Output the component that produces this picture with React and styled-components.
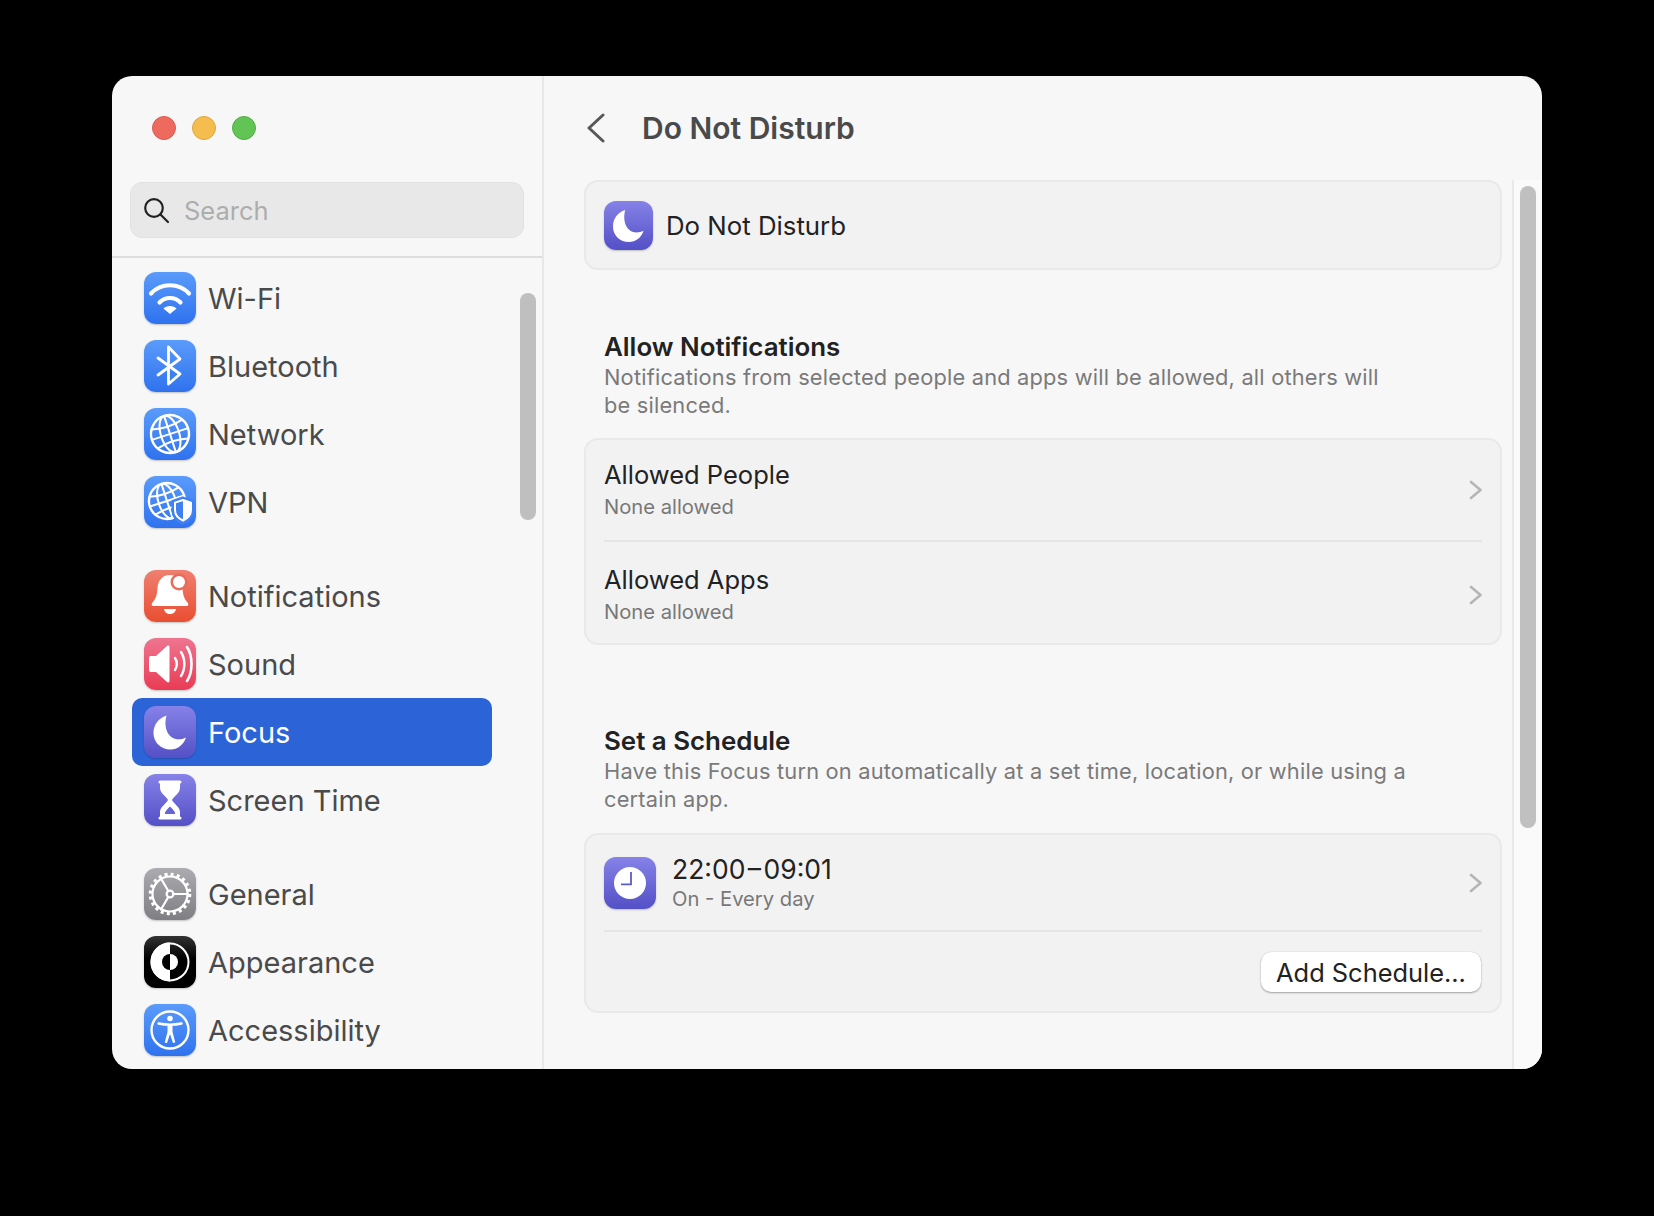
import React from 'react';
import styled, { createGlobalStyle } from 'styled-components';

const Global = createGlobalStyle`
  html, body { margin: 0; padding: 0; background: #000; height: 100%; overflow: hidden; }
  body { font-family: Inter, "Liberation Sans", sans-serif; -webkit-font-smoothing: antialiased; }
`;

const gradients = {
  blue: 'linear-gradient(#5a9bfb, #3072ee)',
  red: 'linear-gradient(#ef8070, #e94e32)',
  pink: 'linear-gradient(#ee7590, #ea3b55)',
  purple: 'linear-gradient(#8682e8, #5450c6)',
  gray: 'linear-gradient(#acacb0, #7f7f83)',
  black: 'linear-gradient(#333, #000 45%)',
};

const Window = styled.div`
  width: 1430px;
  height: 993px;
  margin: 76px 0 0 112px;
  background: #f7f7f7;
  border-radius: 20px;
  overflow: hidden;
  display: flex;
`;

const Sidebar = styled.aside`
  position: relative;
  width: 432px;
  flex: none;
  box-sizing: border-box;
  border-right: 2px solid #e8e8e8;
  overflow: hidden;
`;

const Lights = styled.div`
  display: flex;
  gap: 16px;
  padding: 40px 0 0 40px;
`;

const Light = styled.span`
  width: 24px;
  height: 24px;
  border-radius: 50%;
  box-sizing: border-box;
  background: ${(p) => p.$color};
  border: 1px solid ${(p) => p.$edge};
`;

const Search = styled.div`
  box-sizing: border-box;
  margin: 42px 18px 0;
  height: 56px;
  display: flex;
  align-items: center;
  gap: 14px;
  padding-left: 12px;
  background: #e8e8e8;
  border: 1px solid #e1e1e1;
  border-radius: 12px;
  color: #adadad;
  font-size: 25.5px;
`;

const SideRule = styled.div`
  height: 2px;
  margin-top: 18px;
  background: #dedede;
`;

const Nav = styled.nav`
  padding: 6px 0 0 20px;
  display: flex;
  flex-direction: column;
`;

const NavGroup = styled.div`
  display: flex;
  flex-direction: column;
  margin-bottom: 26px;
`;

const NavRow = styled.div`
  box-sizing: border-box;
  width: 360px;
  height: 68px;
  padding-left: 12px;
  display: flex;
  align-items: center;
  gap: 12px;
  border-radius: 10px;
  font-size: 29px;
  color: ${(p) => (p.$active ? '#fff' : '#4a4a4a')};
  background: ${(p) => (p.$active ? '#2c64d8' : 'transparent')};
`;

const AppIcon = styled.span`
  width: ${(p) => p.$size || 52}px;
  height: ${(p) => p.$size || 52}px;
  flex: none;
  display: block;
  border-radius: ${(p) => (p.$size ? Math.round(p.$size * 0.24) : 12)}px;
  background: ${(p) => gradients[p.$tone]};
  box-shadow: 0 1px 2px rgba(0, 0, 0, 0.22);
  svg { display: block; width: 100%; height: 100%; }
`;

const SideThumb = styled.div`
  position: absolute;
  left: 408px;
  top: 217px;
  width: 16px;
  height: 227px;
  border-radius: 8px;
  background: #bfbfbf;
`;

const Main = styled.main`
  flex: 1;
  min-width: 0;
  display: flex;
  flex-direction: column;
`;

const Header = styled.header`
  height: 104px;
  flex: none;
  display: flex;
  align-items: center;
  padding: 0 0 0 43px;
  gap: 37px;
  box-sizing: border-box;
  color: #4a4a4a;
`;

const PageTitle = styled.h1`
  margin: -1px 0 0;
  font-size: 30px;
  font-weight: 600;
  color: #4a4a4a;
`;

const Body = styled.div`
  flex: 1;
  display: flex;
  min-height: 0;
`;

const Content = styled.div`
  flex: 1;
  padding: 0 10px 0 40px;
  min-width: 0;
`;

const Track = styled.div`
  width: 22px;
  flex: none;
  background: #fafafa;
  border-left: 2px solid #e9e9e9;
  padding: 6px 0 0 6px;
`;

const TrackThumb = styled.div`
  width: 16px;
  height: 642px;
  border-radius: 8px;
  background: #c0c0c0;
`;

const Card = styled.section`
  box-sizing: border-box;
  background: #f2f2f2;
  border: 2px solid #e9e9e9;
  border-radius: 14px;
  padding: 0 18px;
`;

const TopRow = styled.div`
  height: 86px;
  display: flex;
  align-items: center;
  gap: 13px;
  font-size: 25.8px;
  color: #222;
`;

const SectionHead = styled.div`
  padding: 0 20px;
  margin-top: ${(p) => p.$top}px;
  margin-bottom: ${(p) => p.$gap}px;
`;

const SectionTitle = styled.h2`
  margin: 0;
  font-size: 25.9px;
  line-height: 32px;
  font-weight: 600;
  color: #222;
`;

const SectionText = styled.p`
  margin: 0;
  font-size: 21.8px;
  line-height: 28px;
  color: #7a7a7a;
  letter-spacing: 0.2px;
  white-space: nowrap;
`;

const ListRow = styled.div`
  height: ${(p) => p.$h}px;
  display: flex;
  align-items: center;
  gap: 16px;
  box-sizing: border-box;
  padding-top: ${(p) => p.$top || 0}px;
  border-bottom: ${(p) => (p.$rule ? '2px solid #e5e5e5' : 'none')};
`;

const RowText = styled.div`
  flex: 1;
  display: flex;
  flex-direction: column;
`;

const RowTitle = styled.div`
  font-size: 25.5px;
  line-height: 34px;
  color: #222;
`;

const TimeTitle = styled(RowTitle)`
  font-size: 26.5px;
  line-height: 31px;
`;

const RowSub = styled.div`
  font-size: 20.2px;
  line-height: 30px;
  color: #787878;
`;

const TimeSub = styled(RowSub)`
  line-height: 27px;
`;

const ButtonRow = styled.div`
  display: flex;
  justify-content: flex-end;
  padding: 20px 1px 0 0;
  height: 79px;
  box-sizing: border-box;
`;

const PushButton = styled.button`
  width: 220px;
  height: 40px;
  padding: 0;
  border: none;
  border-radius: 10px;
  background: #fff;
  box-shadow: 0 1px 2px rgba(0, 0, 0, 0.32), 0 0 1px rgba(0, 0, 0, 0.2);
  font-family: inherit;
  font-size: 25.4px;
  color: #222;
`;

const Line = (p) => <path fill="none" stroke="#fff" strokeLinecap="round" strokeLinejoin="round" {...p} />;

const Moon = () => (
  <svg viewBox="0 0 52 52"><path fill="#fff" d="M22.500 9.500C14.500 12 9.500 19 9.500 27c0 9.500 7.500 16.500 17 16.500 7 0 13-4.500 15.500-12-2.500 1.300-5 1.800-7.500 1.800C25 33.300 19 23 22.500 9.500z" /></svg>
);

const GlobeLines = ({ r = 19, cx = 26, cy = 26 }) => (
  <g transform={`rotate(-18 ${cx} ${cy})`}>
    <circle cx={cx} cy={cy} r={r} fill="none" stroke="#fff" strokeWidth="2.4" />
    <ellipse cx={cx} cy={cy} rx={r * 0.48} ry={r} fill="none" stroke="#fff" strokeWidth="2" />
    <Line strokeWidth="2" d={`M${cx} ${cy - r}V${cy + r}`} />
    <Line strokeWidth="2" d={`M${cx - r} ${cy}H${cx + r}`} />
    <Line strokeWidth="2" d={`M${cx - r * 0.82} ${cy - r * 0.52}Q${cx} ${cy - r * 0.3} ${cx + r * 0.82} ${cy - r * 0.52}`} />
    <Line strokeWidth="2" d={`M${cx - r * 0.82} ${cy + r * 0.52}Q${cx} ${cy + r * 0.3} ${cx + r * 0.82} ${cy + r * 0.52}`} />
  </g>
);

const icons = {
  wifi: (
    <svg viewBox="0 0 52 52">
      <Line strokeWidth="4.200" d="M7 21.500C17 10.500 35 10.500 45 21.500" />
      <Line strokeWidth="4.200" d="M15.500 30.500C21 24.500 31 24.500 36.500 30.500" />
      <path fill="#fff" d="M26 34c2.600 0 5 1 6.600 2.400L26 42l-6.600-5.600C21 35 23.400 34 26 34z" />
    </svg>
  ),
  bluetooth: (
    <svg viewBox="0 0 52 52">
      <Line strokeWidth="2.800" d="M14 18L36 34 24.500 44V7L36 19 14 35" />
    </svg>
  ),
  network: <svg viewBox="0 0 52 52"><GlobeLines /></svg>,
  vpn: (
    <svg viewBox="0 0 52 52">
      <GlobeLines cx={23} cy={25} r={18} />
      <path fill="#3f80f2" stroke="#3f80f2" strokeWidth="5" d="M39 23l9 3v8c0 6-4 10-9 12-5-2-9-6-9-12v-8z" />
      <path fill="none" stroke="#fff" strokeWidth="2" strokeLinejoin="round" d="M39 24l8 2.600V34c0 5-3.500 8.500-8 10.500-4.500-2-8-5.500-8-10.500v-7.400z" />
      <path fill="#fff" d="M39 24l8 2.600V34c0 5-3.500 8.500-8 10.500z" />
    </svg>
  ),
  bell: (
    <svg viewBox="0 0 52 52">
      <path fill="#fff" d="M26 5c-8 0-12 6-12.500 13-.4 6-1 10-5 14.500-1.500 2-1 3.500 1 3.500h33c2 0 2.500-1.500 1-3.500-4-4.500-4.600-8.500-5-14.500C38 11 34 5 26 5z" />
      <path fill="#fff" d="M20 39h12c-.5 3-3 5-6 5s-5.500-2-6-5z" />
      <circle cx="35" cy="12" r="8.500" fill="#ec6b58" />
      <circle cx="35" cy="12" r="6" fill="#fff" />
    </svg>
  ),
  sound: (
    <svg viewBox="0 0 52 52">
      <path fill="#fff" d="M5 20c0-1.500 1-2 2-2h5l11-10c1.500-1 2.500-.5 2.500 1.500v33c0 2-1 2.500-2.500 1.500L12 34H7c-1 0-2-.5-2-2z" />
      <Line strokeWidth="2.400" d="M31 20c2.500 4 2.500 8 0 12" />
      <Line strokeWidth="2.400" d="M37 14c4.500 7 4.500 17 0 24" />
      <Line strokeWidth="2.600" d="M43 9c6 9 6 25 0 34" />
    </svg>
  ),
  moon: <Moon />,
  hourglass: (
    <svg viewBox="0 0 52 52">
      <Line strokeWidth="3" d="M16 8h20M16 44h20" />
      <path fill="#fff" d="M16 8h20v6c0 5-6 8-8 12 2 4 8 7 8 12v6H16v-6c0-5 6-8 8-12-2-4-8-7-8-12z" />
      <path fill="#6764d4" d="M21 38.500c1-2 3-4 5-6 2 2 4 4 5 6v1.500H21z" />
    </svg>
  ),
  gear: (
    <svg viewBox="0 0 52 52">
      <circle cx="26" cy="26" r="17.500" fill="none" stroke="#fff" strokeWidth="2.200" />
      <circle cx="26" cy="26" r="19.500" fill="none" stroke="#fff" strokeWidth="3.600" strokeDasharray="3 3.130" />
      <circle cx="26" cy="26" r="3.400" fill="none" stroke="#fff" strokeWidth="2.200" />
      <Line strokeWidth="2.200" d="M29.400 26H44M24.300 23L17 10.500M24.300 29L17 41.500" />
    </svg>
  ),
  appearance: (
    <svg viewBox="0 0 52 52">
      <circle cx="26" cy="26" r="18.500" fill="none" stroke="#fff" strokeWidth="2" />
      <path fill="#fff" d="M26 6.500a19.500 19.500 0 0 0 0 39z" />
      <path fill="#000" d="M26 18a8 8 0 0 0 0 16z" />
      <path fill="#fff" d="M26 18a8 8 0 0 1 0 16z" />
    </svg>
  ),
  accessibility: (
    <svg viewBox="0 0 52 52">
      <circle cx="26" cy="26" r="18.500" fill="none" stroke="#fff" strokeWidth="2.400" />
      <circle cx="26" cy="14.500" r="2.800" fill="#fff" />
      <Line strokeWidth="2.400" d="M14.500 19.500C22 21 30 21 37.500 19.500" />
      <path fill="#fff" d="M23.500 20.500h5V28l2.800 10.500-2.300.5L26 30l-3 9-2.300-.5L23.500 28z" />
    </svg>
  ),
  clock: (
    <svg viewBox="0 0 52 52">
      <circle cx="26" cy="26" r="16" fill="#fff" />
      <path fill="none" stroke="#5f5acb" strokeWidth="1.800" d="M27 15v12.300H17" />
    </svg>
  ),
};

const navGroups = [
  [
    { label: 'Wi-Fi', icon: 'wifi', tone: 'blue' },
    { label: 'Bluetooth', icon: 'bluetooth', tone: 'blue' },
    { label: 'Network', icon: 'network', tone: 'blue' },
    { label: 'VPN', icon: 'vpn', tone: 'blue' },
  ],
  [
    { label: 'Notifications', icon: 'bell', tone: 'red' },
    { label: 'Sound', icon: 'sound', tone: 'pink' },
    { label: 'Focus', icon: 'moon', tone: 'purple', active: true },
    { label: 'Screen Time', icon: 'hourglass', tone: 'purple' },
  ],
  [
    { label: 'General', icon: 'gear', tone: 'gray' },
    { label: 'Appearance', icon: 'appearance', tone: 'black' },
    { label: 'Accessibility', icon: 'accessibility', tone: 'blue' },
  ],
];

const SearchIcon = () => (
  <svg width="27" height="27" viewBox="0 0 27 27" fill="none" stroke="#222" strokeWidth="2.200" strokeLinecap="round">
    <circle cx="11" cy="11" r="8.800" />
    <path d="M17.500 17.500L25 25" />
  </svg>
);

const Back = () => (
  <svg width="18" height="30" viewBox="0 0 18 30" fill="none" stroke="#585858" strokeWidth="3" strokeLinecap="round" strokeLinejoin="round">
    <path d="M16 2L2 15l14 13" />
  </svg>
);

const Chevron = () => (
  <svg width="13" height="20" viewBox="0 0 13 20" fill="none" stroke="#b5b5b5" strokeWidth="2.600" strokeLinecap="round" strokeLinejoin="round">
    <path d="M2 2l9.500 8L2 18" />
  </svg>
);

export default function App() {
  return (
    <>
      <Global />
      <Window>
        <Sidebar>
          <Lights>
            <Light $color="#ee6a5f" $edge="#d95b50" />
            <Light $color="#f5bd4f" $edge="#dfa640" />
            <Light $color="#61c454" $edge="#52ae46" />
          </Lights>
          <Search>
            <SearchIcon />
            Search
          </Search>
          <SideRule />
          <Nav>
            {navGroups.map((group) => (
              <NavGroup key={group[0].label}>
                {group.map((item) => (
                  <NavRow key={item.label} $active={item.active}>
                    <AppIcon $tone={item.tone}>{icons[item.icon]}</AppIcon>
                    {item.label}
                  </NavRow>
                ))}
              </NavGroup>
            ))}
          </Nav>
          <SideThumb />
        </Sidebar>

        <Main>
          <Header>
            <Back />
            <PageTitle>Do Not Disturb</PageTitle>
          </Header>
          <Body>
            <Content>
              <Card>
                <TopRow>
                  <AppIcon $tone="purple" $size={49}><Moon /></AppIcon>
                  Do Not Disturb
                </TopRow>
              </Card>

              <SectionHead $top={61} $gap={19}>
                <SectionTitle>Allow Notifications</SectionTitle>
                <SectionText>Notifications from selected people and apps will be allowed, all others will<br />be silenced.</SectionText>
              </SectionHead>
              <Card>
                <ListRow $h={102} $rule>
                  <RowText>
                    <RowTitle>Allowed People</RowTitle>
                    <RowSub>None allowed</RowSub>
                  </RowText>
                  <Chevron />
                </ListRow>
                <ListRow $h={101} $top={5}>
                  <RowText>
                    <RowTitle>Allowed Apps</RowTitle>
                    <RowSub>None allowed</RowSub>
                  </RowText>
                  <Chevron />
                </ListRow>
              </Card>

              <SectionHead $top={80} $gap={20}>
                <SectionTitle>Set a Schedule</SectionTitle>
                <SectionText>Have this Focus turn on automatically at a set time, location, or while using a<br />certain app.</SectionText>
              </SectionHead>
              <Card>
                <ListRow $h={97} $rule>
                  <AppIcon $tone="purple">{icons.clock}</AppIcon>
                  <RowText>
                    <TimeTitle>22:00{'\u200A'}–{'\u200A'}09:01</TimeTitle>
                    <TimeSub>On - Every day</TimeSub>
                  </RowText>
                  <Chevron />
                </ListRow>
                <ButtonRow>
                  <PushButton>Add Schedule...</PushButton>
                </ButtonRow>
              </Card>
            </Content>
            <Track>
              <TrackThumb />
            </Track>
          </Body>
        </Main>
      </Window>
    </>
  );
}
